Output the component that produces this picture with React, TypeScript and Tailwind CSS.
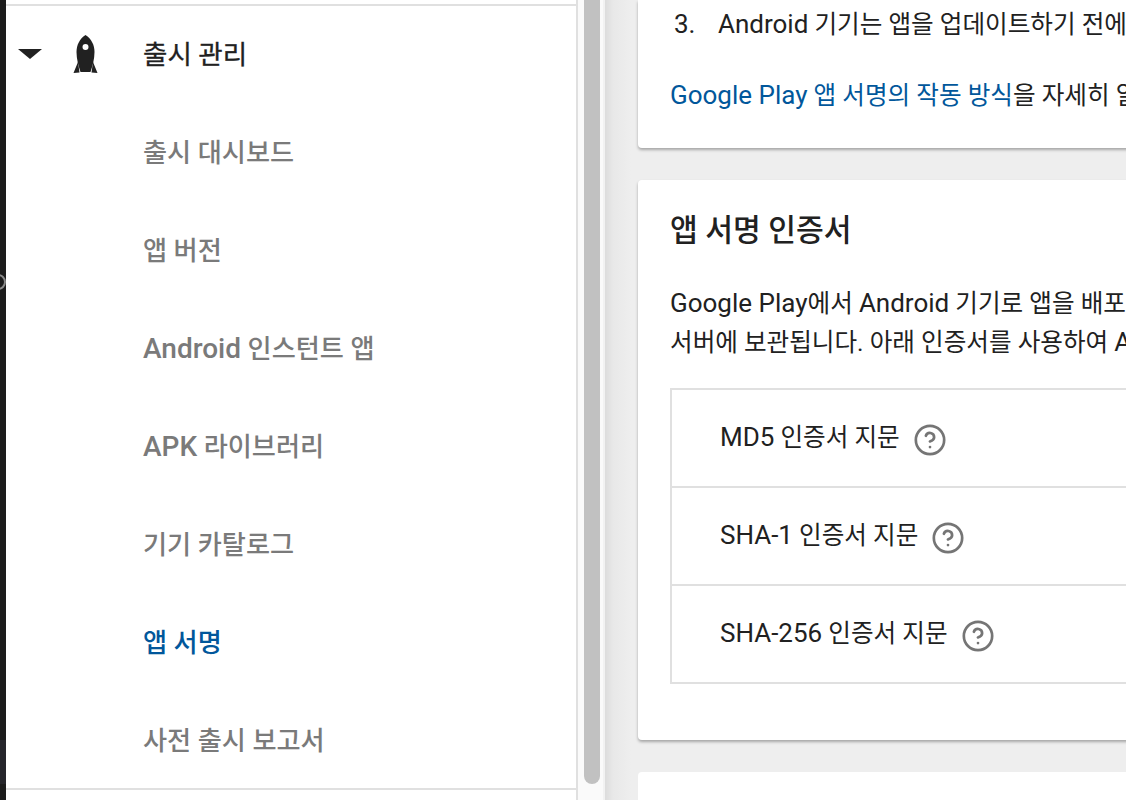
import { CircleHelp } from 'lucide-react';

const FONT = "font-['Roboto','Noto_Sans_CJK_KR',sans-serif]";

const MENU = ['출시 대시보드', '앱 버전', 'Android 인스턴트 앱', 'APK 라이브러리', '기기 카탈로그', '앱 서명', '사전 출시 보고서'];

const FINGERPRINTS = ['MD5 인증서 지문', 'SHA-1 인증서 지문', 'SHA-256 인증서 지문'];

// latin runs sit a little larger than the hangul around them
function Mixed({ text, latin }: { text: string; latin: string }) {
  return (
    <>
      {text.split(/([A-Za-z0-9][A-Za-z0-9.\-]*(?: Play)?)/).map((part, i) =>
        i % 2 === 1 ? <span key={i} className={latin}>{part}</span> : part
      )}
    </>
  );
}

function Rocket() {
  return (
    <svg width="25" height="38" viewBox="0 0 24 38" className="text-[#212121]">
      <path
        fill="currentColor"
        fillRule="evenodd"
        d="M12 0C6 4 3 10 3 17C3 24 5 31 7 37H17C19 31 21 24 21 17C21 10 18 4 12 0ZM12 9a3 3 0 1 1 0 6a3 3 0 0 1 0-6Z"
      />
      <path fill="currentColor" d="M4.5 27L0 38L6 37.5ZM19.5 27L24 38L18 37.5Z" />
    </svg>
  );
}

function Sidebar() {
  return (
    <div className="w-[572px] h-full bg-white border-r-2 border-[#e0e0e0] shrink-0 flex flex-col">
      <div className="h-[2px] mt-1 bg-[#e0e0e0]" />
      <div className="h-[98px] flex items-center shrink-0">
        <div className="ml-3 mt-[-2px] w-0 h-0 border-l-[12px] border-r-[12px] border-t-[10px] border-l-transparent border-r-transparent border-t-[#212121]" />
        <div className="ml-[31px] mt-[-2px]">
          <Rocket />
        </div>
        <span className="ml-[45px] text-[26.5px] text-[#212121] [-webkit-text-stroke:0.3px_#212121]">출시 관리</span>
      </div>
      {MENU.map(m => (
        <div
          key={m}
          className={`h-[98px] shrink-0 flex items-center pl-[137px] text-[26.2px] font-medium ${m === '앱 서명' ? 'text-[#01579b]' : 'text-[#7a7a7a]'}`}
        >
          <span className={/[A-Z]/.test(m) ? '' : 'pt-[2px]'}><Mixed text={m} latin="text-[28px]" /></span>
        </div>
      ))}
      <div className="h-[2px] mt-[-2px] bg-[#e0e0e0]" />
    </div>
  );
}

function Scrollbar() {
  return (
    <div className="w-[27px] h-full bg-[#fafafa] border-r-2 border-[#f2f2f2] shrink-0 pl-[6px]">
      <div className="w-4 h-[784px] bg-[#c1c1c1] rounded-b-lg" />
    </div>
  );
}

export default function App() {
  const latin = 'text-[26px]';
  return (
    <div className={`${FONT} relative w-[1126px] h-[800px] overflow-hidden flex bg-white`}>
      <div className="w-[6px] h-full bg-[#1c1c1c] shrink-0 flex flex-col overflow-hidden">
        <div className="h-[274px]" />
        <div className="h-4 w-4 -ml-[10px] rounded-full border-2 border-[#8a8a8a]" />
        <div className="h-[450px]" />
        <div className="h-11 bg-[#26262b]" />
      </div>
      <Sidebar />
      <Scrollbar />
      <main className="flex-1 h-full overflow-hidden pl-[33px] flex flex-col gap-8 bg-[#eeeeee] bg-[linear-gradient(90deg,#dcdcdc_0px,#e8e8e8_8px,#eeeeee_26px)]">
        <section className="w-[900px] h-[148px] shrink-0 bg-white rounded-b-[4px] shadow-[0_2px_3px_rgba(0,0,0,0.3)] whitespace-nowrap text-[24.6px] leading-[38px] text-[#212121]">
          <div className="flex pl-9 pt-[5px]">
            <span className="w-11"><Mixed text="3." latin={latin} /></span>
            <span><Mixed text="Android 기기는 앱을 업데이트하기 전에" latin={latin} /></span>
          </div>
          <p className="pl-8 mt-[32px]">
            <span className="text-[#01579b]"><Mixed text="Google Play 앱 서명의 작동 방식" latin={latin} /></span>을 자세히 알
          </p>
        </section>

        <section className="w-[900px] h-[560px] shrink-0 bg-white rounded-[4px] shadow-[0_2px_3px_rgba(0,0,0,0.3)] whitespace-nowrap text-[#212121] pl-8 pt-[29px]">
          <h2 className="text-[30.2px] leading-[44px] font-medium">앱 서명 인증서</h2>
          <p className="text-[24.6px] leading-[39px] mt-[31px]">
            <Mixed text="Google Play에서 Android 기기로 앱을 배포" latin={latin} />
            <br />
            <Mixed text="서버에 보관됩니다. 아래 인증서를 사용하여 A" latin={latin} />
          </p>
          <div className="border-2 border-[#e0e0e0] mt-[26px] w-[700px]">
            {FINGERPRINTS.map((f, i) => (
              <div
                key={f}
                className={`flex items-center pl-[48px] gap-[13px] text-[24.6px] ${i > 0 ? 'border-t-2 border-[#e0e0e0] h-[98px]' : 'h-[96px]'}`}
              >
                <span className="-mt-[2px]"><Mixed text={f} latin={latin} /></span>
                <CircleHelp size={34} strokeWidth={1.9} className="text-[#757575] mt-[4px]" />
              </div>
            ))}
          </div>
        </section>

        <section className="w-[900px] h-[100px] shrink-0 bg-white rounded-t-[4px]" />
      </main>
    </div>
  );
}
